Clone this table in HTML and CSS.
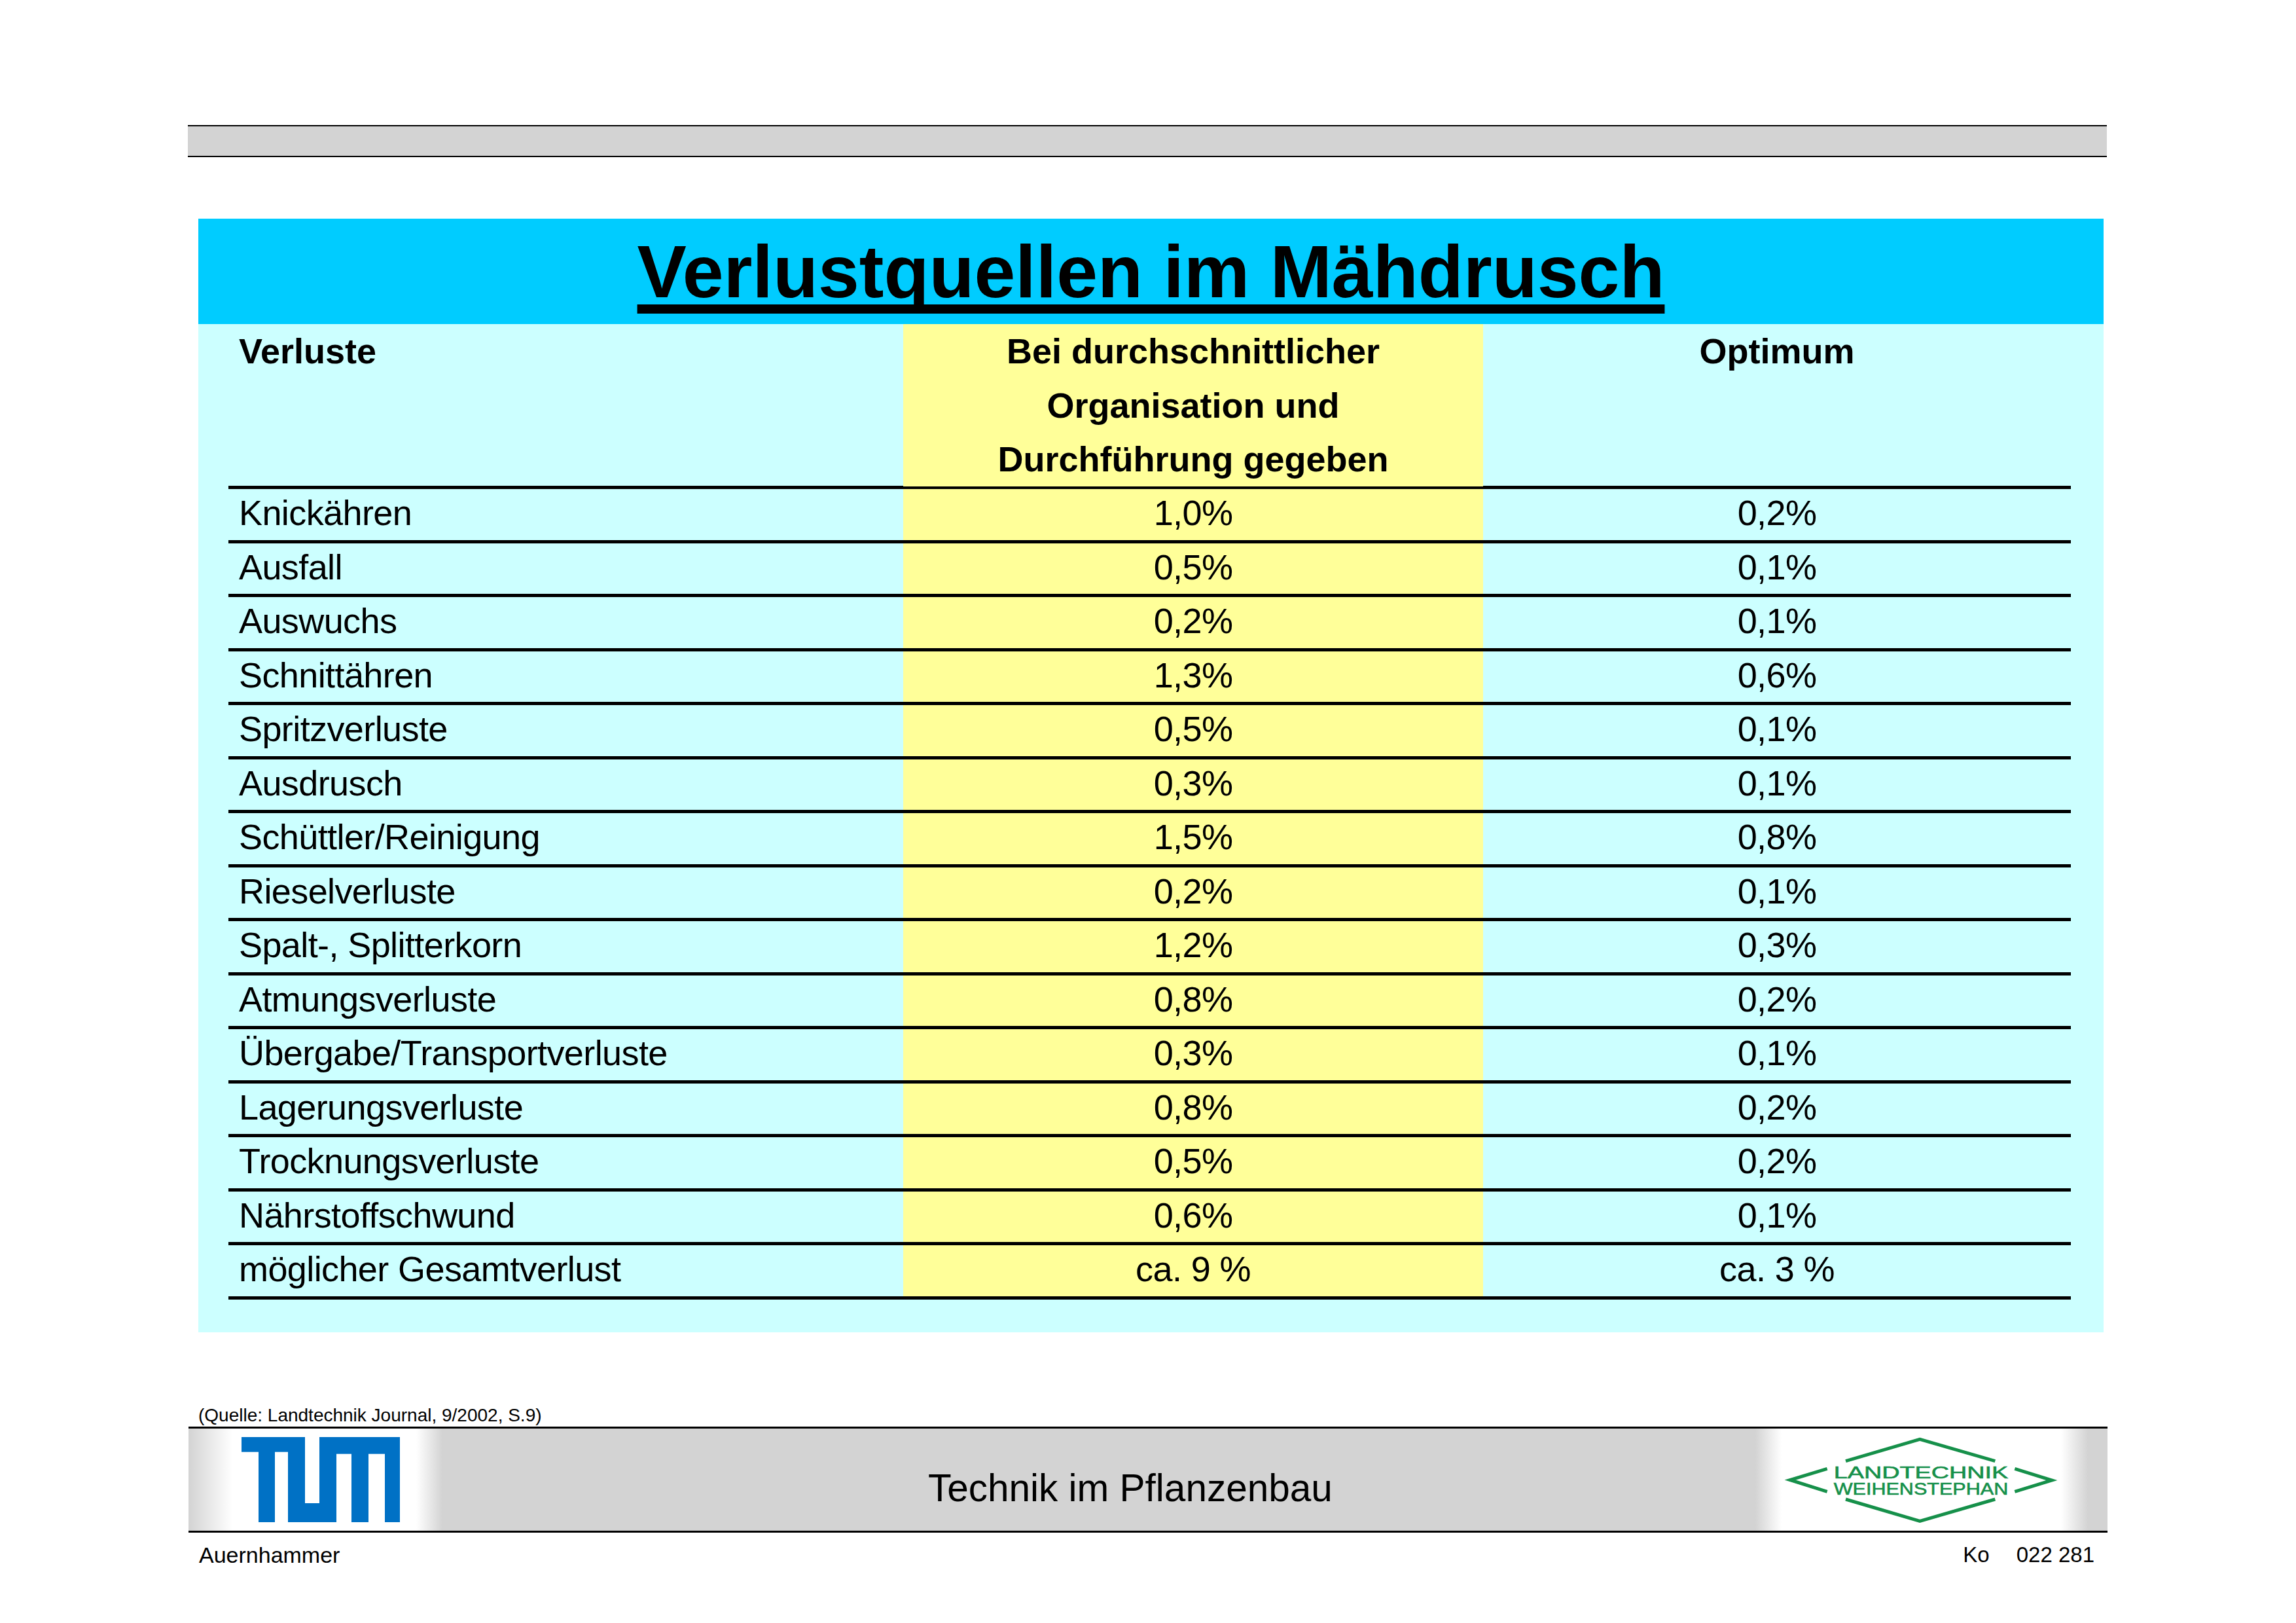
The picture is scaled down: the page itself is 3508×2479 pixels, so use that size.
FILE: index.html
```html
<!DOCTYPE html>
<html lang="de">
<head>
<meta charset="utf-8">
<title>Verlustquellen im Mähdrusch</title>
<link rel="stylesheet" href="styles.css">
</head>
<body>
<div class="page">
  <div class="topbar"></div>

  <section class="sheet">
    <h1 class="title"><span>Verlustquellen im Mähdrusch</span></h1>
    <div class="table">
      <div class="row head">
        <div class="c1">Verluste</div>
        <div class="c2">Bei durchschnittlicher<br>Organisation und<br>Durchführung gegeben</div>
        <div class="c3">Optimum</div>
      </div>
      <div class="row item"><div class="c1">Knickähren</div><div class="c2">1,0%</div><div class="c3">0,2%</div></div>
      <div class="row item"><div class="c1">Ausfall</div><div class="c2">0,5%</div><div class="c3">0,1%</div></div>
      <div class="row item"><div class="c1">Auswuchs</div><div class="c2">0,2%</div><div class="c3">0,1%</div></div>
      <div class="row item"><div class="c1">Schnittähren</div><div class="c2">1,3%</div><div class="c3">0,6%</div></div>
      <div class="row item"><div class="c1">Spritzverluste</div><div class="c2">0,5%</div><div class="c3">0,1%</div></div>
      <div class="row item"><div class="c1">Ausdrusch</div><div class="c2">0,3%</div><div class="c3">0,1%</div></div>
      <div class="row item"><div class="c1">Schüttler/Reinigung</div><div class="c2">1,5%</div><div class="c3">0,8%</div></div>
      <div class="row item"><div class="c1">Rieselverluste</div><div class="c2">0,2%</div><div class="c3">0,1%</div></div>
      <div class="row item"><div class="c1">Spalt-, Splitterkorn</div><div class="c2">1,2%</div><div class="c3">0,3%</div></div>
      <div class="row item"><div class="c1">Atmungsverluste</div><div class="c2">0,8%</div><div class="c3">0,2%</div></div>
      <div class="row item"><div class="c1">Übergabe/Transportverluste</div><div class="c2">0,3%</div><div class="c3">0,1%</div></div>
      <div class="row item"><div class="c1">Lagerungsverluste</div><div class="c2">0,8%</div><div class="c3">0,2%</div></div>
      <div class="row item"><div class="c1">Trocknungsverluste</div><div class="c2">0,5%</div><div class="c3">0,2%</div></div>
      <div class="row item"><div class="c1">Nährstoffschwund</div><div class="c2">0,6%</div><div class="c3">0,1%</div></div>
      <div class="row item last"><div class="c1">möglicher Gesamtverlust</div><div class="c2">ca. 9 %</div><div class="c3">ca. 3 %</div></div>
    </div>
  </section>

  <div class="source">(Quelle: Landtechnik Journal, 9/2002, S.9)</div>

  <div class="footer">
    <div class="tum-box">
      <svg class="tum" width="242" height="130" viewBox="42 45 726 390" aria-label="TUM">
        <polygon fill="#0071c5" points="42,45 333,45 333,348 399,348 399,45 768,45 768,435 699,435 699,122 624,122 624,435 546,435 546,122 477,122 477,435 255,435 255,113 195,113 195,435 120,435 120,113 42,113"/>
      </svg>
    </div>
    <div class="footer-title">Technik im Pflanzenbau</div>
    <div class="lt-box">
      <svg class="lt" width="430" height="150" viewBox="0 0 430 150" aria-label="Landtechnik Weihenstephan">
        <g fill="none" stroke="#16904a" stroke-width="5" stroke-linejoin="miter">
          <polyline points="71.7,58.3 15,75.5 71.7,93.3"/>
          <polyline points="100,46.7 213.3,13.3 328.3,46.7"/>
          <polyline points="358.3,58.3 415,76 358.3,93.3"/>
          <polyline points="100,105 213.3,138.3 328.3,105"/>
        </g>
        <text class="lt-text" x="81.7" y="73.3" textLength="266.6" lengthAdjust="spacingAndGlyphs">LANDTECHNIK</text>
        <text class="lt-text" x="81.7" y="98.3" textLength="266.6" lengthAdjust="spacingAndGlyphs">WEIHENSTEPHAN</text>
      </svg>
    </div>
  </div>

  <div class="meta">
    <span class="meta-left">Auernhammer</span>
    <span class="meta-right"><span>Ko</span><span>022 281</span></span>
  </div>
</div>
</body>
</html>
```

FILE: styles.css
```css
* { box-sizing: border-box; }

html, body { margin: 0; padding: 0; }

body {
  width: 3508px;
  height: 2479px;
  overflow: hidden;
  background: #ffffff;
  color: #000000;
  font-family: "Liberation Sans", Arial, Helvetica, sans-serif;
}

.page { padding-top: 191px; }

.topbar {
  margin-left: 287px;
  width: 2932px;
  height: 49px;
  background: #d3d3d3;
  border-top: 2px solid #000;
  border-bottom: 2px solid #000;
}

.sheet {
  margin: 94px 0 0 303px;
  width: 2911px;
  height: 1701px;
  background: #ccffff;
}

.title {
  margin: 0;
  height: 161px;
  background: #00ccff;
  font-size: 113px;
  font-weight: 700;
  line-height: 163px;
  text-align: center;
}

.title span {
  text-decoration: underline;
  text-decoration-thickness: 14px;
  text-underline-offset: 11px;
  text-decoration-skip-ink: none;
}

.table {
  margin-left: 46px;
  width: 2815px;
  font-size: 54px;
}

.row {
  display: grid;
  grid-template-columns: 1031px 886px 898px;
}

.head {
  height: 247px;
  font-weight: 700;
  line-height: 82.5px;
}

.item {
  height: 82.5px;
  border-top: 5px solid #000;
  line-height: 72.5px;
  letter-spacing: -0.6px;
}

.item.last {
  height: 87.5px;
  border-bottom: 5px solid #000;
}

.c1 { padding-left: 16px; white-space: nowrap; }
.c2 { background: #ffff99; text-align: center; white-space: nowrap; }
.c3 { text-align: center; white-space: nowrap; }

.source {
  margin: 111px 0 0 303px;
  font-size: 28px;
  line-height: 32px;
}

.footer {
  margin: 1px 0 0 288px;
  width: 2932px;
  height: 162px;
  display: flex;
  background: #d3d3d3;
  border-top: 3px solid #000;
  border-bottom: 3px solid #000;
}

.tum-box {
  width: 388px;
  padding: 13px 0 0 81px;
  background: linear-gradient(to right, #d3d3d3 0px, #ffffff 67px, #ffffff 348px, #d3d3d3 388px);
}

.tum { display: block; }

.footer-title {
  flex: 1;
  padding: 58px 0 0 742px;
  font-size: 58.5px;
  line-height: 66px;
  white-space: nowrap;
}

.lt-box {
  width: 538px;
  padding: 3px 0 0 38px;
  background: linear-gradient(to right, #d3d3d3 0px, #ffffff 40px, #ffffff 467px, #d3d3d3 508px, #d3d3d3 538px);
}

.lt { display: block; }

.lt-text {
  fill: #16904a;
  stroke: #16904a;
  stroke-width: 0.6px;
  font-family: "Liberation Sans", Arial, sans-serif;
  font-size: 26px;
}

.meta {
  margin: 15px 0 0 304px;
  width: 2896px;
  display: flex;
  justify-content: space-between;
  font-size: 33px;
  line-height: 38px;
}

.meta-left { font-size: 34px; }

.meta-right {
  display: flex;
  gap: 41px;
}
```
